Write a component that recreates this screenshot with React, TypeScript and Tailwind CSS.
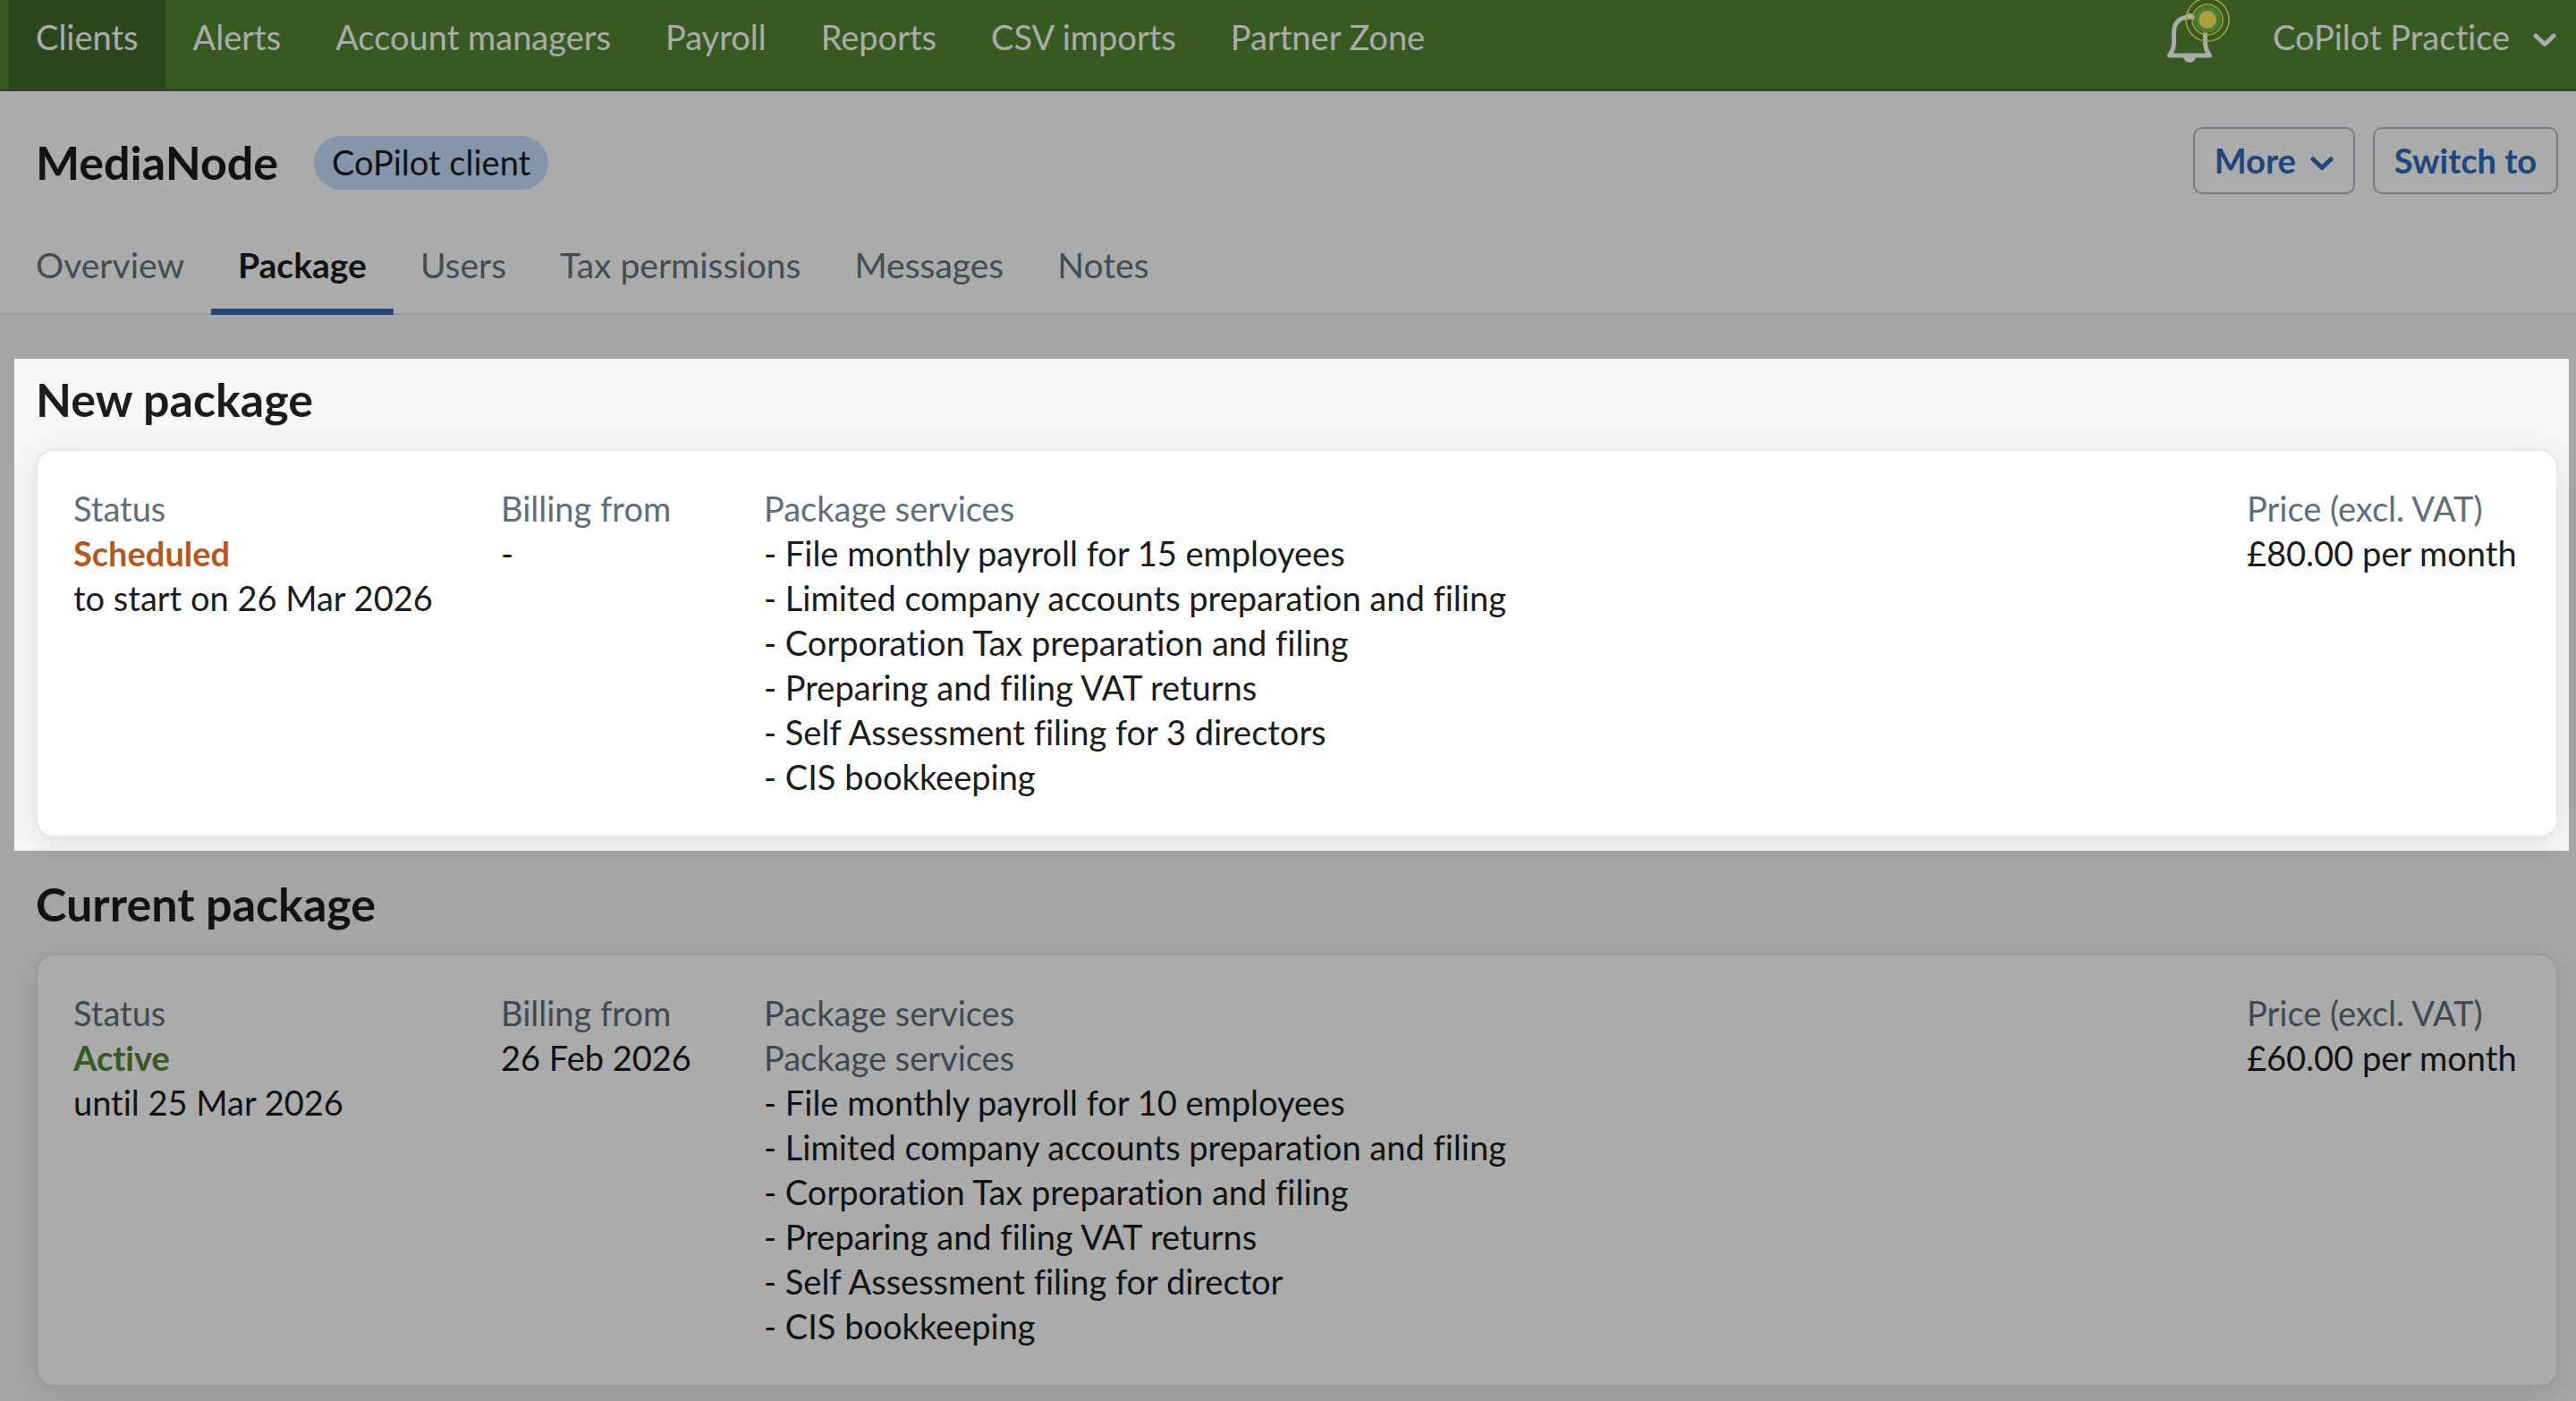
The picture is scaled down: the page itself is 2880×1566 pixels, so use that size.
const NAV = ["Clients", "Alerts", "Account managers", "Payroll", "Reports", "CSV imports", "Partner Zone"];
const TABS = ["Overview", "Package", "Users", "Tax permissions", "Messages", "Notes"];

type Service = { text: string; muted?: boolean };

type PackageInfo = {
  status: string;
  statusClass: string;
  statusNote: string;
  billingFrom: string;
  services: Service[];
  price: string;
};

const NEW_PACKAGE: PackageInfo = {
  status: "Scheduled",
  statusClass: "text-[#b5581f]",
  statusNote: "to start on 26 Mar 2026",
  billingFrom: "-",
  services: [
    { text: "- File monthly payroll for 15 employees" },
    { text: "- Limited company accounts preparation and filing" },
    { text: "- Corporation Tax preparation and filing" },
    { text: "- Preparing and filing VAT returns" },
    { text: "- Self Assessment filing for 3 directors" },
    { text: "- CIS bookkeeping" },
  ],
  price: "£80.00 per month",
};

const CURRENT_PACKAGE: PackageInfo = {
  status: "Active",
  statusClass: "text-[#518634]",
  statusNote: "until 25 Mar 2026",
  billingFrom: "26 Feb 2026",
  services: [
    { text: "Package services", muted: true },
    { text: "- File monthly payroll for 10 employees" },
    { text: "- Limited company accounts preparation and filing" },
    { text: "- Corporation Tax preparation and filing" },
    { text: "- Preparing and filing VAT returns" },
    { text: "- Self Assessment filing for director" },
    { text: "- CIS bookkeeping" },
  ],
  price: "£60.00 per month",
};

function Chevron() {
  return (
    <svg className="mt-2" width="26" height="16" viewBox="0 0 26 16" fill="none" aria-hidden="true">
      <path d="M3 3 L13 12.500 L23 3" stroke="currentColor" strokeWidth="5" strokeLinecap="round" strokeLinejoin="round" />
    </svg>
  );
}

function Bell() {
  return (
    <svg width="70" height="70" viewBox="0 0 70 70" fill="none" aria-hidden="true">
      <path
        d="M25 19 C13.500 19 7.500 26 7.500 36 V48 C7.500 55 5 58 2.500 62 H47.500 C45 58 42.500 55 42.500 48 V36 C42.500 26 36.500 19 25 19 Z"
        stroke="white"
        strokeWidth="5"
        strokeLinejoin="round"
      />
      <path d="M20.500 20 L22 16 Q25 13 28 16 L29.500 20 Z" fill="white" />
      <path d="M18 63 A7 7 0 0 0 32 63 Z" fill="white" />
      <circle cx="45" cy="22" r="15" fill="#70b94b" />
      <circle cx="45" cy="22" r="17" stroke="#fdf05a" strokeWidth="1.500" />
      <circle cx="45" cy="22" r="24" stroke="#fdf05a" strokeWidth="1.500" />
      <circle cx="45" cy="22" r="10" fill="#fdf05a" />
    </svg>
  );
}

function PackageCard({ info }: { info: PackageInfo }) {
  return (
    <dl className="grid grid-cols-[478px_294px_1fr_306px] rounded-[20px] border-2 border-[#e5e5ea] bg-white px-10 pt-[39px] pb-[41px] shadow-[0_8px_32px_rgba(0,0,0,0.09)]">
      <div>
        <dt className="text-[#606e79]">Status</dt>
        <dd>
          <strong className={"block font-bold " + info.statusClass}>{info.status}</strong>
          {info.statusNote}
        </dd>
      </div>
      <div>
        <dt className="text-[#606e79]">Billing from</dt>
        <dd>{info.billingFrom}</dd>
      </div>
      <div>
        <dt className="text-[#606e79]">Package services</dt>
        {info.services.map((s) => (
          <dd key={s.text} className={s.muted ? "text-[#606e79]" : ""}>
            {s.text}
          </dd>
        ))}
      </div>
      <div className="whitespace-nowrap">
        <dt className="text-[#606e79]">Price (excl. VAT)</dt>
        <dd>{info.price}</dd>
      </div>
    </dl>
  );
}

export default function App() {
  return (
    <div className="min-h-screen overflow-hidden bg-[#f4f6f8] font-[Lato,sans-serif] text-[38px] leading-[50px] text-[#1a1c1e] [font-variant-ligatures:none]">
      <header className="flex justify-between border-b-[3px] border-[#446b2e] bg-[#518634] text-white">
        <nav aria-label="Main" className="flex gap-px pl-[10px]">
          {NAV.map((item) => (
            <a
              key={item}
              href="#"
              className={"px-[30px] pt-4 pb-[33px] " + (item === "Clients" ? "bg-[#426a2d]" : "")}
            >
              {item}
            </a>
          ))}
        </nav>
        <div className="flex items-start gap-12 pr-[22px]">
          <button type="button" aria-label="Notifications">
            <Bell />
          </button>
          <button type="button" className="flex items-center gap-[26px] pt-4">
            CoPilot Practice
            <Chevron />
          </button>
        </div>
      </header>

      <div className="border-b-2 border-[#e5e5ec] bg-white">
        <div className="flex items-start justify-between pt-10 pr-5 pl-10">
          <div className="flex items-start gap-10 pt-[9px]">
            <h1 className="text-[52px] leading-[60px] font-bold">MediaNode</h1>
            <span className="mt-px rounded-full bg-[#c8e0fe] px-5 pb-[2px] leading-[58px]">CoPilot client</span>
          </div>
          <div className="flex gap-5 font-bold text-[#2e6abe]">
            <button
              type="button"
              className="flex items-center gap-4 rounded-[10px] border-2 border-[#b2bbc2] px-[22px] pt-[10px] pb-[11px]"
            >
              More
              <Chevron />
            </button>
            <button type="button" className="rounded-[10px] border-2 border-[#b2bbc2] px-[22px] pt-[10px] pb-[11px]">
              Switch to
            </button>
          </div>
        </div>
        <nav aria-label="Client" className="-mb-[2px] flex pt-[54px] pl-[10px] text-[39px]">
          {TABS.map((tab) => (
            <a
              key={tab}
              href="#"
              className={
                "border-b-[7px] px-[30px] pb-[24px] " +
                (tab === "Package" ? "border-[#2e6abe] font-bold" : "border-transparent text-[#64737d]")
              }
            >
              {tab}
            </a>
          ))}
        </nav>
      </div>

      <main className="pt-[49px] pr-2 pb-4 pl-4">
        <section className="relative z-10 pt-[15px] pr-3 pb-[15px] pl-6 shadow-[0_0_0_4000px_rgba(0,0,0,0.33)]">
          <h2 className="mb-[26px] text-[52px] leading-[60px] font-bold">New package</h2>
          <PackageCard info={NEW_PACKAGE} />
        </section>
        <section className="pt-[29px] pr-3 pl-6">
          <h2 className="mb-[26px] text-[52px] leading-[60px] font-bold">Current package</h2>
          <PackageCard info={CURRENT_PACKAGE} />
        </section>
      </main>
    </div>
  );
}
